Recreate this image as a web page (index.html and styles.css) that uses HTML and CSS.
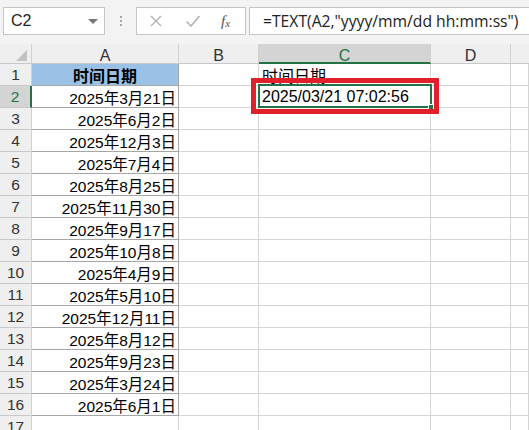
FILE: index.html
```html
<!DOCTYPE html>
<html lang="zh-CN">
<head>
<meta charset="utf-8">
<title>Excel TEXT</title>
<link rel="stylesheet" href="styles.css">
</head>
<body>
<div class="app">
  <div class="toolbar">
    <div class="namebox"><span class="ref">C2</span><span class="dd"></span></div>
    <div class="grip"><i></i><i></i><i></i></div>
    <div class="fbtns">
      <svg class="ico" width="14" height="14" viewBox="0 0 14 14"><path d="M2 2 L12 12 M12 2 L2 12" stroke="#b4b4b4" stroke-width="1.4" fill="none"/></svg>
      <svg class="ico" width="16" height="14" viewBox="0 0 16 14"><path d="M1.5 7.5 L6 12 L14.5 2" stroke="#b4b4b4" stroke-width="1.6" fill="none"/></svg>
      <span class="fx">f<sub>x</sub></span>
    </div>
    <div class="formula">=TEXT(A2,"yyyy/mm/dd hh:mm:ss")</div>
  </div>
  <div class="sheet">
    <div class="grid">
      <div class="hd corner"><span class="tri"></span></div>
      <div class="hd col">A</div>
      <div class="hd col">B</div>
      <div class="hd col sel">C</div>
      <div class="hd col">D</div>
      <div class="hd col last"></div>

      <div class="hd row">1</div><div class="c a head">时间日期</div><div class="c"></div><div class="c t">时间日期</div><div class="c"></div><div class="c"></div>
      <div class="hd row sel">2</div><div class="c a">2025年3月21日</div><div class="c"></div><div class="c t">2025/03/21 07:02:56</div><div class="c"></div><div class="c"></div>
      <div class="hd row">3</div><div class="c a">2025年6月2日</div><div class="c"></div><div class="c"></div><div class="c"></div><div class="c"></div>
      <div class="hd row">4</div><div class="c a">2025年12月3日</div><div class="c"></div><div class="c"></div><div class="c"></div><div class="c"></div>
      <div class="hd row">5</div><div class="c a">2025年7月4日</div><div class="c"></div><div class="c"></div><div class="c"></div><div class="c"></div>
      <div class="hd row">6</div><div class="c a">2025年8月25日</div><div class="c"></div><div class="c"></div><div class="c"></div><div class="c"></div>
      <div class="hd row">7</div><div class="c a">2025年11月30日</div><div class="c"></div><div class="c"></div><div class="c"></div><div class="c"></div>
      <div class="hd row">8</div><div class="c a">2025年9月17日</div><div class="c"></div><div class="c"></div><div class="c"></div><div class="c"></div>
      <div class="hd row">9</div><div class="c a">2025年10月8日</div><div class="c"></div><div class="c"></div><div class="c"></div><div class="c"></div>
      <div class="hd row">10</div><div class="c a">2025年4月9日</div><div class="c"></div><div class="c"></div><div class="c"></div><div class="c"></div>
      <div class="hd row">11</div><div class="c a">2025年5月10日</div><div class="c"></div><div class="c"></div><div class="c"></div><div class="c"></div>
      <div class="hd row">12</div><div class="c a">2025年12月11日</div><div class="c"></div><div class="c"></div><div class="c"></div><div class="c"></div>
      <div class="hd row">13</div><div class="c a">2025年8月12日</div><div class="c"></div><div class="c"></div><div class="c"></div><div class="c"></div>
      <div class="hd row">14</div><div class="c a">2025年9月23日</div><div class="c"></div><div class="c"></div><div class="c"></div><div class="c"></div>
      <div class="hd row">15</div><div class="c a">2025年3月24日</div><div class="c"></div><div class="c"></div><div class="c"></div><div class="c"></div>
      <div class="hd row">16</div><div class="c a">2025年6月1日</div><div class="c"></div><div class="c"></div><div class="c"></div><div class="c"></div>
      <div class="hd row">17</div><div class="c"></div><div class="c"></div><div class="c"></div><div class="c"></div><div class="c"></div>
    </div>
    <div class="selbox"><span class="handle"></span></div>
    <div class="redbox"></div>
  </div>
</div>
</body>
</html>
```

FILE: styles.css
```css
* { box-sizing: border-box; }
html, body { margin: 0; padding: 0; }
body {
  width: 529px;
  height: 430px;
  overflow: hidden;
  background: #ffffff;
  font-family: "Liberation Sans", "Noto Sans CJK SC", sans-serif;
  color: #000;
}
.app { width: 529px; height: 430px; overflow: hidden; }

.toolbar {
  height: 44px;
  background: #f3f3f3;
  display: flex;
  align-items: flex-start;
  padding: 7px 0 0 3px;
}
.namebox {
  width: 102px;
  height: 28px;
  background: #fff;
  border: 1px solid #c6c6c6;
  display: flex;
  align-items: center;
  justify-content: space-between;
  padding: 0 6px 0 7px;
  font-size: 16px;
  color: #222;
}
.dd {
  width: 0; height: 0;
  border-left: 5px solid transparent;
  border-right: 5px solid transparent;
  border-top: 5px solid #777;
}
.grip {
  width: 31px;
  height: 28px;
  display: flex;
  flex-direction: column;
  align-items: center;
  justify-content: center;
  gap: 2px;
}
.grip i { width: 2px; height: 2px; background: #a8a8a8; display: block; }
.fbtns {
  width: 110px;
  height: 28px;
  background: #fff;
  border: 1px solid #c6c6c6;
  display: flex;
  align-items: center;
  padding: 0 0 0 12px;
  gap: 0;
}
.fbtns .ico:nth-child(1) { margin-right: 22px; }
.fbtns .ico:nth-child(2) { margin-right: 20px; }
.fx {
  font-family: "Liberation Serif", serif;
  font-style: italic;
  font-size: 15px;
  color: #555;
  line-height: 1;
}
.fx sub { font-size: 11px; vertical-align: -1px; }
.formula {
  flex: 1;
  height: 28px;
  margin-left: 3px;
  background: #fff;
  border: 1px solid #c6c6c6;
  border-right: none;
  font-family: "Open Sans", "Liberation Sans", sans-serif;
  font-size: 15.7px;
  line-height: 26px;
  padding-left: 13px;
  color: #222;
  white-space: nowrap;
  overflow: hidden;
}

.sheet { position: relative; }
.grid {
  display: grid;
  grid-template-columns: 32px 147px 80px 172px 80px 1fr;
  grid-template-rows: 20px repeat(17, 22px);
}
.hd {
  background: #efefef;
  border-right: 1px solid #d0d0d0;
  border-bottom: 1px solid #c8c8c8;
  color: #333;
  font-size: 16px;
  display: flex;
  align-items: center;
  justify-content: center;
}
.corner { position: relative; }
.tri {
  position: absolute;
  right: 4px;
  bottom: 2px;
  width: 0; height: 0;
  border-left: 11px solid transparent;
  border-bottom: 11px solid #c2c2c2;
}
.hd.col { padding-top: 4px; }
.hd.col.sel {
  background: #d4d4d4;
  color: #217346;
  border-bottom: 2px solid #217346;
  padding-top: 5px;
}
.hd.last { border-right: none; }
.hd.row { font-size: 15.5px; color: #333; }
.hd.row.sel {
  background: #d4d4d4;
  color: #217346;
  border-right: 2px solid #217346;
}
.c {
  border-right: 1px solid #d4d4d4;
  border-bottom: 1px solid #d4d4d4;
  font-size: 16px;
  white-space: nowrap;
  display: flex;
  align-items: center;
  overflow: visible;
}
.c.a {
  font-size: 15.5px;
  justify-content: flex-end;
  padding-right: 2px;
  border-right: 1px solid #a6a6a6;
  border-bottom: 1px solid #a6a6a6;
}
.c.a.head {
  font-size: 16px;
  background: #9bc2e6;
  justify-content: center;
  font-weight: bold;
  padding-right: 0;
}
.c.t { padding-left: 3px; }

.selbox {
  position: absolute;
  left: 258px;
  top: 40px;
  width: 174px;
  height: 24px;
  border: 2px solid #217346;
}
.handle {
  position: absolute;
  right: -4px;
  bottom: -4px;
  width: 6px;
  height: 6px;
  background: #217346;
  border: 1px solid #fff;
}
.redbox {
  position: absolute;
  left: 251px;
  top: 34px;
  width: 188px;
  height: 36px;
  border: 5px solid #e0202a;
}
```
